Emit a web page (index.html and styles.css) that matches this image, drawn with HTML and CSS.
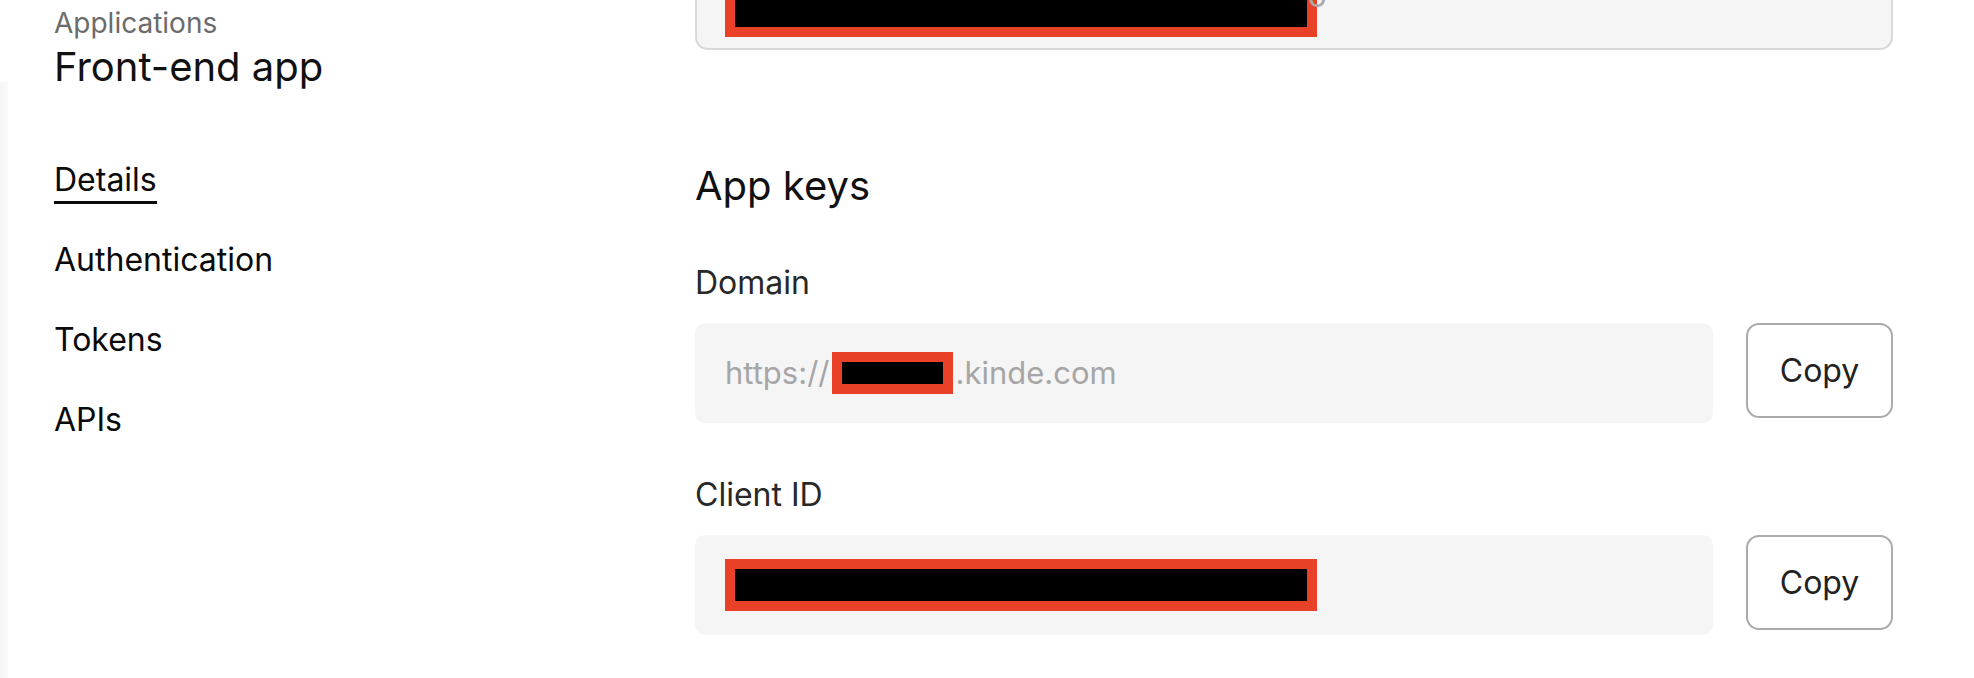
FILE: index.html
```html
<!DOCTYPE html>
<html lang="en">
<head>
<meta charset="utf-8">
<title>Front-end app</title>
<link rel="stylesheet" href="styles.css">
</head>
<body>
<div class="page">
  <div class="rail"></div>
  <aside class="sidebar">
    <div class="crumb">Applications</div>
    <h1 class="title">Front-end app</h1>
    <nav class="nav">
      <div class="nav-item"><span class="nav-link active">Details</span></div>
      <div class="nav-item"><span class="nav-link">Authentication</span></div>
      <div class="nav-item"><span class="nav-link">Tokens</span></div>
      <div class="nav-item"><span class="nav-link">APIs</span></div>
    </nav>
  </aside>
  <main class="main">
    <div class="top-card">
      <div class="top-row">
        <div class="redact redact-top"></div>
        <span class="top-tail">o</span>
      </div>
    </div>
    <h2 class="section-title">App keys</h2>
    <div class="field">
      <div class="label">Domain</div>
      <div class="field-row">
        <div class="input">
          <span class="input-text">https://</span>
          <span class="redact redact-small"></span>
          <span class="input-text">.kinde.com</span>
        </div>
        <button class="copy-btn">Copy</button>
      </div>
    </div>
    <div class="field field-second">
      <div class="label">Client ID</div>
      <div class="field-row">
        <div class="input">
          <span class="redact redact-wide"></span>
        </div>
        <button class="copy-btn">Copy</button>
      </div>
    </div>
  </main>
</div>
</body>
</html>
```
FILE: styles.css
```css
* { box-sizing: border-box; }
html, body { margin: 0; padding: 0; background: #ffffff; }
body {
  font-family: Inter, "Noto Sans", "Liberation Sans", sans-serif;
  color: #0f0f0f;
  overflow: hidden;
  height: 678px;
}
.page {
  display: flex;
  align-items: flex-start;
  height: 678px;
}
.rail {
  width: 8px;
  margin-top: 82px;
  height: 596px;
  background: linear-gradient(to right, #f5f5f5, #fafafa);
  flex: none;
}
.sidebar {
  width: 641px;
  margin-left: 46px;
  flex: none;
}
.crumb {
  font-size: 28px;
  line-height: 34px;
  margin-top: 6px;
  color: #6b6b6b;
}
.title {
  margin: 5px 0 0;
  font-size: 40px;
  line-height: 44px;
  font-weight: 400;
  color: #111;
}
.nav {
  display: flex;
  flex-direction: column;
  gap: 40px;
  margin-top: 71px;
}
.nav-item {
  height: 40px;
  font-size: 32px;
  line-height: 40px;
  color: #0a0a0a;
}
.nav-link { display: inline-block; }
.nav-link.active {
  border-bottom: 3px solid #0a0a0a;
  padding-bottom: 1px;
}
.main {
  width: 1198px;
  flex: none;
}
.top-card {
  height: 50px;
  background: #f5f5f5;
  border: 2px solid #d9d9d9;
  border-top: 0;
  border-radius: 0 0 13px 13px;
  padding-left: 28px;
  overflow: hidden;
}
.top-row {
  display: flex;
  align-items: flex-start;
}
.redact {
  display: inline-block;
  background: #000;
  border: 10px solid #e84128;
  flex: none;
}
.redact-top {
  width: 592px;
  height: 37px;
  border-top: 0;
}
.top-tail {
  margin-top: -22px;
  margin-left: -9px;
  font-size: 31px;
  line-height: 36px;
  color: #a8a8a8;
}
.section-title {
  margin: 114px 0 0;
  font-size: 40px;
  line-height: 44px;
  font-weight: 400;
  color: #111;
}
.field { margin-top: 55px; }
.field-second { margin-top: 52px; }
.label {
  font-size: 32px;
  line-height: 40px;
  color: #282828;
}
.field-row {
  display: flex;
  align-items: flex-start;
  gap: 33px;
  margin-top: 20px;
}
.input {
  width: 1019px;
  height: 100px;
  background: #f5f5f5;
  border-radius: 10px;
  padding-left: 30px;
  display: flex;
  align-items: center;
}
.input-text {
  font-size: 31px;
  line-height: 36px;
  color: #a6a6a6;
}
.redact-small {
  width: 121px;
  height: 42px;
  margin-left: 3px;
  margin-right: 2px;
}
.redact-wide {
  width: 592px;
  height: 52px;
}
.copy-btn {
  width: 147px;
  height: 95px;
  background: #fff;
  border: 2px solid #ababab;
  border-radius: 13px;
  font-family: inherit;
  font-size: 32px;
  color: #222;
  padding: 0;
}
```
